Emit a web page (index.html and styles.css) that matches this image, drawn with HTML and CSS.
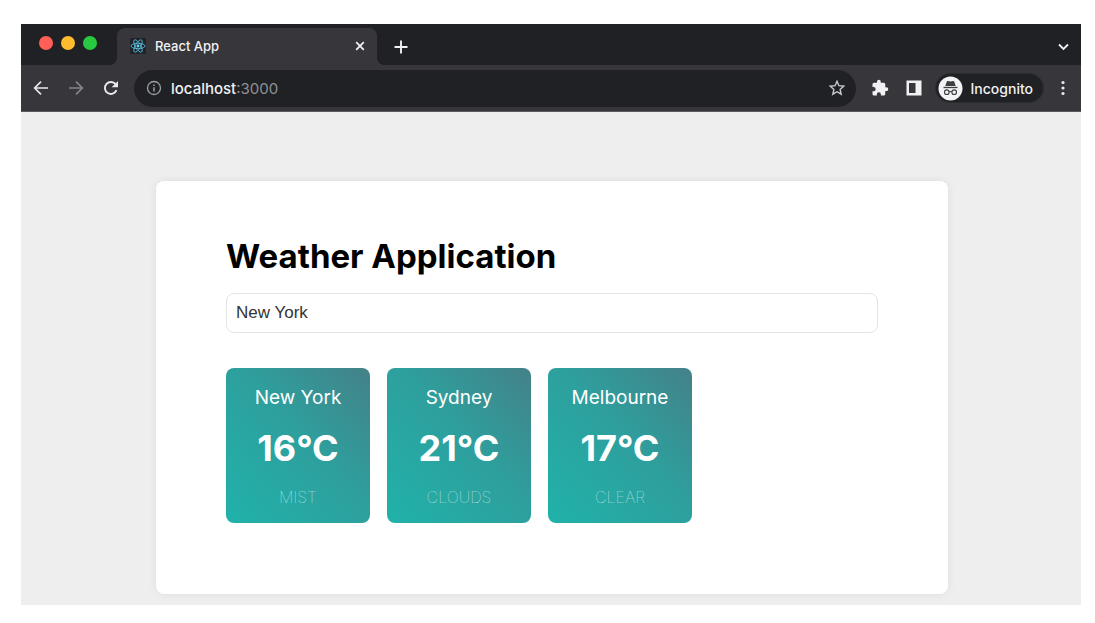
FILE: index.html
```html
<!DOCTYPE html>
<html lang="en">
<head>
<meta charset="utf-8">
<meta name="viewport" content="width=device-width, initial-scale=1">
<title>React App</title>
<link rel="stylesheet" href="styles.css">
</head>
<body>
<div class="window">
  <header class="tab-strip">
    <div class="lights">
      <button class="light light-close" aria-label="Close window"></button>
      <button class="light light-minimize" aria-label="Minimize window"></button>
      <button class="light light-zoom" aria-label="Zoom window"></button>
    </div>
    <div class="tab">
      <svg class="favicon" viewBox="0 0 16 16" aria-hidden="true">
        <rect width="16" height="16" rx="1" fill="#20232a"/>
        <g fill="none" stroke="#61dafb" stroke-width=".7">
          <ellipse cx="8" cy="8" rx="7" ry="2.7"/>
          <ellipse cx="8" cy="8" rx="7" ry="2.7" transform="rotate(60 8 8)"/>
          <ellipse cx="8" cy="8" rx="7" ry="2.7" transform="rotate(120 8 8)"/>
        </g>
        <circle cx="8" cy="8" r="1.4" fill="#61dafb"/>
      </svg>
      <span class="tab-title">React App</span>
      <button class="icon-button tab-close" aria-label="Close tab">
        <svg width="10" height="10" viewBox="0 0 10 10"><path d="M1.2 1.2l7.6 7.6M8.8 1.2L1.2 8.8" stroke="#f1f1f3" stroke-width="1.8"/></svg>
      </button>
    </div>
    <button class="icon-button new-tab" aria-label="New tab">
      <svg width="14" height="14" viewBox="0 0 14 14"><path d="M7 .5v13M.5 7h13" stroke="#f1f1f3" stroke-width="1.9"/></svg>
    </button>
    <button class="icon-button tab-search" aria-label="Search tabs">
      <svg width="11" height="8" viewBox="0 0 11 8"><path d="M1 1.5l4.5 4.5L10 1.5" fill="none" stroke="#f1f1f3" stroke-width="1.8"/></svg>
    </button>
  </header>

  <nav class="toolbar">
    <div class="history">
      <button class="icon-button" aria-label="Back">
        <svg width="16" height="16" viewBox="0 0 16 16"><path d="M15 8H2M8 1.7L1.7 8 8 14.3" fill="none" stroke="#e8eaed" stroke-width="1.7"/></svg>
      </button>
      <button class="icon-button" aria-label="Forward">
        <svg width="16" height="16" viewBox="0 0 16 16"><path d="M1 8h13M8 1.7L14.3 8 8 14.3" fill="none" stroke="#85858a" stroke-width="1.7"/></svg>
      </button>
      <button class="icon-button" aria-label="Reload">
        <svg width="16" height="16" viewBox="0 0 16 16"><path d="M13.5 10.2A6 6 0 1 1 12.7 4.3" fill="none" stroke="#e8eaed" stroke-width="1.9"/><path d="M15 .9v6.4H8.6z" fill="#e8eaed"/></svg>
      </button>
    </div>
    <div class="omnibox">
      <button class="icon-button" aria-label="Site information">
        <svg width="16" height="16" viewBox="0 0 16 16"><circle cx="8" cy="8" r="6.5" fill="none" stroke="#9aa0a6" stroke-width="1.3"/><path d="M8 7.2v4.2M8 4.4v1.6" stroke="#9aa0a6" stroke-width="1.5"/></svg>
      </button>
      <span class="address"><span class="host">localhost</span>:3000</span>
      <button class="icon-button" aria-label="Bookmark this tab">
        <svg width="16" height="16" viewBox="0 0 16 16"><path d="M8 1.3l1.9 4.4 4.9.5-3.7 3.2 1.1 4.8L8 11.7l-4.2 2.5 1.1-4.8L1.2 6.2l4.9-.5z" fill="none" stroke="#c8cacd" stroke-width="1.4"/></svg>
      </button>
    </div>
    <button class="icon-button extensions" aria-label="Extensions">
      <svg width="18" height="18" viewBox="0 0 24 24"><path fill="#f1f1f3" d="M20.5 11H19V7a2 2 0 0 0-2-2h-4V3.500a2.500 2.500 0 0 0-5 0V5H4a2 2 0 0 0-2 2v3.800h1.500a2.700 2.700 0 0 1 0 5.400H2V20a2 2 0 0 0 2 2h3.800v-1.500a2.700 2.700 0 0 1 5.400 0V22H17a2 2 0 0 0 2-2v-4h1.500a2.500 2.500 0 0 0 0-5z"/></svg>
    </button>
    <button class="icon-button side-panel" aria-label="Side panel">
      <svg width="16" height="16" viewBox="0 0 16 16"><path fill="#f1f1f3" fill-rule="evenodd" d="M.5 .5h15v15H.5zM3 3v10h6.500V3z"/></svg>
    </button>
    <button class="profile">
      <svg width="25" height="25" viewBox="0 0 25 25" aria-hidden="true">
        <circle cx="12.500" cy="12.500" r="12" fill="#f1f3f4"/>
        <path d="M8.700 5.700q.3-.9 1.200-.7l2.600.6 2.600-.6q.9-.2 1.200.7L17.700 10H7.300z" fill="#3c4043"/>
        <path d="M5.500 11.500h14" stroke="#3c4043" stroke-width="1.300"/>
        <g fill="none" stroke="#3c4043" stroke-width="1.100"><circle cx="8.800" cy="16.200" r="2.300"/><circle cx="16.200" cy="16.200" r="2.300"/><path d="M11.100 16q1.400-.9 2.800 0"/></g>
      </svg>
      Incognito
    </button>
    <button class="icon-button menu" aria-label="Menu">
      <svg width="4" height="16" viewBox="0 0 4 16" fill="#e8eaed"><circle cx="2" cy="2.500" r="1.600"/><circle cx="2" cy="8" r="1.600"/><circle cx="2" cy="13.500" r="1.600"/></svg>
    </button>
  </nav>

  <main class="page">
    <section class="panel">
      <h1 class="title">Weather Application</h1>
      <input class="search" type="text" aria-label="City" value="New York">
      <ul class="cities">
        <li class="city">
          <h2 class="city-name">New York</h2>
          <p class="temperature">16°C</p>
          <p class="conditions">MIST</p>
        </li>
        <li class="city">
          <h2 class="city-name">Sydney</h2>
          <p class="temperature">21°C</p>
          <p class="conditions">CLOUDS</p>
        </li>
        <li class="city">
          <h2 class="city-name">Melbourne</h2>
          <p class="temperature">17°C</p>
          <p class="conditions">CLEAR</p>
        </li>
      </ul>
    </section>
  </main>
</div>
</body>
</html>
```
FILE: styles.css
```css
* {
  box-sizing: border-box;
}

body {
  margin: 0;
  padding: 24px 14px 18px 21px;
  background: #fff;
  font-family: Inter, "Liberation Sans", sans-serif;
}

button {
  border: 0;
  padding: 0;
  background: none;
  font: inherit;
}

.icon-button {
  display: flex;
  flex: none;
  align-items: center;
  justify-content: center;
}

.icon-button svg {
  display: block;
}

.tab-strip {
  display: flex;
  align-items: center;
  height: 41px;
  padding: 4px 12px 0 18px;
  background: #202124;
}

.lights {
  display: flex;
  gap: 8px;
  width: 78px;
  padding-bottom: 8px;
}

.light {
  width: 14px;
  height: 14px;
  border-radius: 50%;
}

.light-close {
  background: #ff5f57;
}

.light-minimize {
  background: #febc2e;
}

.light-zoom {
  background: #28c840;
}

.tab {
  position: relative;
  display: flex;
  align-items: center;
  gap: 9px;
  width: 260px;
  height: 37px;
  padding: 0 12px 1px 13px;
  border-radius: 8px 8px 0 0;
  background: #37363b;
  color: #f1f1f3;
  font-size: 13px;
}

.tab::before,
.tab::after {
  content: "";
  position: absolute;
  bottom: 0;
  width: 8px;
  height: 8px;
}

.tab::before {
  right: 100%;
  background: radial-gradient(circle at 0 0, transparent 8px, #37363b 8px);
}

.tab::after {
  left: 100%;
  background: radial-gradient(circle at 100% 0, transparent 8px, #37363b 8px);
}

.favicon {
  width: 16px;
  height: 16px;
}

.tab-title {
  flex: 1;
  font-weight: 500;
}

.new-tab {
  margin-left: 17px;
}

.tab-search {
  margin-left: auto;
}

.toolbar {
  display: flex;
  align-items: center;
  height: 47px;
  padding: 0 16px 0 12px;
  border-bottom: 1px solid #5b5b5e;
  background: #37363b;
}

.history {
  display: flex;
  gap: 19px;
  margin-right: 15px;
}

.omnibox {
  display: flex;
  flex: 1;
  align-items: center;
  gap: 9px;
  height: 37px;
  padding: 0 11px 0 12px;
  border-radius: 19px;
  background: #202124;
}

.address {
  flex: 1;
  color: #8f9195;
  font-size: 15px;
}

.host {
  color: #f1f1f3;
  font-weight: 500;
}

.extensions {
  margin-left: 15px;
}

.side-panel {
  margin: 0 13px 0 17px;
}

.profile {
  display: flex;
  align-items: center;
  gap: 8px;
  height: 30px;
  padding: 0 10px 0 2px;
  border: 1px solid #2c2c30;
  border-radius: 15px;
  background: #202124;
  color: #f1f1f3;
  font-size: 14px;
  font-weight: 500;
}

.menu {
  margin-left: 17px;
}

.page {
  padding: 69px 133px 11px 135px;
  background: #eee;
}

.panel {
  padding: 53px 70px 71px;
  border-radius: 8px;
  background: #fff;
  box-shadow: 0 0 8px rgba(0, 0, 0, 0.07);
}

.title {
  margin: 0 0 15px;
  color: #000;
  font-size: 33px;
  font-weight: 700;
  line-height: 44px;
}

.search {
  display: block;
  width: 100%;
  height: 40px;
  padding: 0 9px;
  border: 1px solid #e4e4e4;
  border-radius: 8px;
  background: #fff;
  color: #333;
  font-family: "Liberation Sans", Arial, sans-serif;
  font-size: 17px;
}

.cities {
  display: flex;
  flex-wrap: wrap;
  gap: 17px;
  margin: 35px 0 0;
  padding: 0;
  list-style: none;
}

.city {
  width: 144px;
  padding: 18px 8px 16px;
  border-radius: 8px;
  background: linear-gradient(to top right, #20b2aa, #2e9f9d 55%, #448188);
  color: #fff;
  text-align: center;
}

.city-name {
  margin: 0 0 16px;
  font-size: 19px;
  font-weight: 400;
  line-height: 24px;
}

.temperature {
  margin: 0 0 17px;
  font-size: 36px;
  font-weight: 700;
  line-height: 44px;
}

.conditions {
  margin: 0;
  color: rgba(255, 255, 255, 0.8);
  font-size: 16px;
  font-weight: 100;
  line-height: 20px;
}
```
